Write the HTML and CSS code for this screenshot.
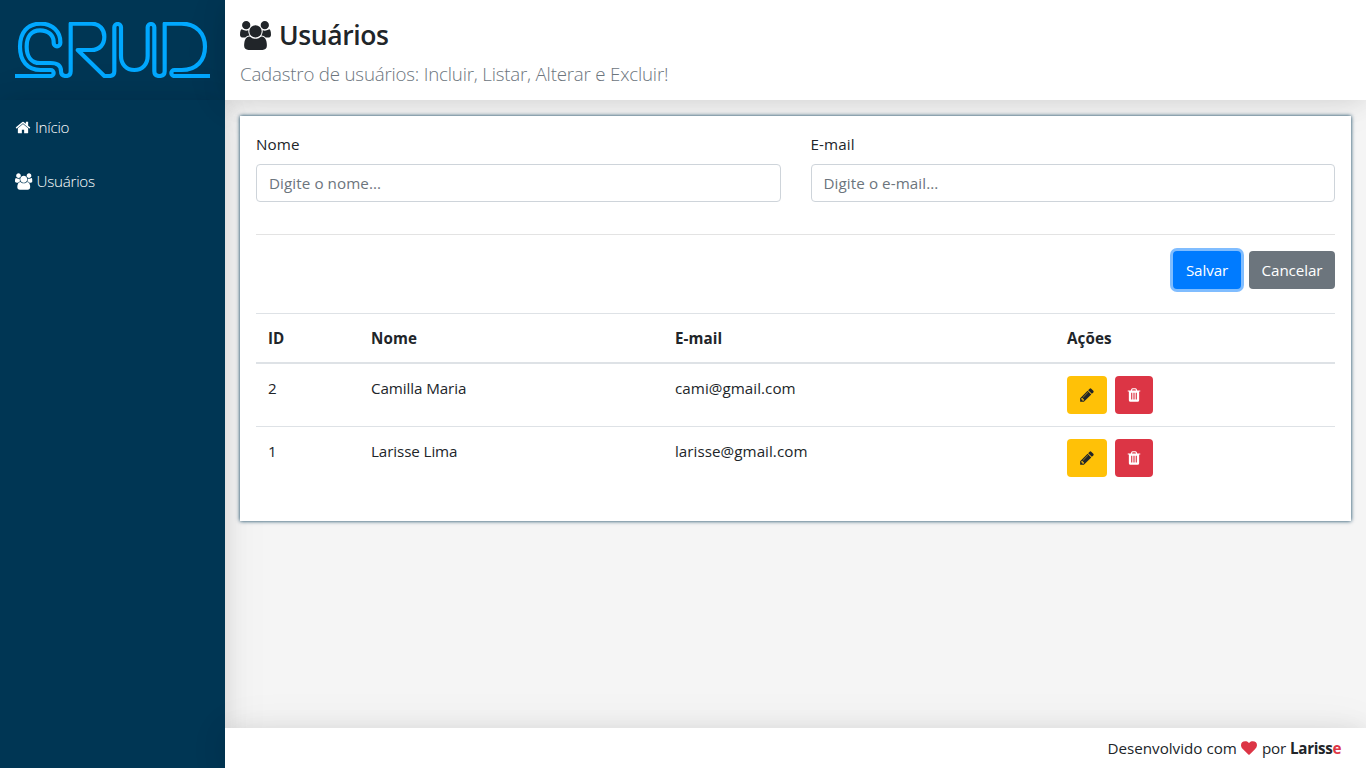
FILE: index.html
```html
<!DOCTYPE html>
<html lang="pt-BR">
<head>
<meta charset="utf-8">
<title>Usuários</title>
<link rel="stylesheet" href="styles.css">
</head>
<body>
<svg class="defs" width="0" height="0" aria-hidden="true">
  <symbol id="home" viewBox="0 0 1792 1792"><path d="M1472 992v480q0 26-19 45t-45 19h-384v-384h-256v384h-384q-26 0-45-19t-19-45v-480q0-1 .5-3t.5-3l575-474 575 474q1 2 1 6zm223-69l-62 74q-8 9-21 11h-3q-13 0-21-7l-692-577-692 577q-12 8-24 7-13-2-21-11l-62-74q-8-10-7-23.5t11-21.5l719-599q32-26 76-26t76 26l244 204v-195q0-14 9-23t23-9h192q14 0 23 9t9 23v408l219 182q10 8 11 21.5t-7 23.5z"/></symbol>
  <symbol id="users" viewBox="0 0 1920 1792"><path d="M593 896q-162 5-265 128h-134q-82 0-138-40.5t-56-118.5q0-353 124-353 6 0 43.5 21t97.5 42.5 119 21.5q67 0 133-23-5 37-5 66 0 139 81 256zm1071 637q0 120-73 189.5t-194 69.5h-874q-121 0-194-69.5t-73-189.5q0-53 3.5-103.5t14-109 26.5-108.5 43-97.5 62-81 85.5-53.5 111.5-20q10 0 43 21.5t73 48 107 48 135 21.5 135-21.5 107-48 73-48 43-21.5q61 0 111.5 20t85.5 53.5 62 81 43 97.5 26.5 108.5 14 109 3.5 103.5zm-1024-1277q0 106-75 181t-181 75-181-75-75-181 75-181 181-75 181 75 75 181zm704 384q0 159-112.5 271.5t-271.5 112.5-271.5-112.5-112.5-271.5 112.5-271.5 271.5-112.5 271.5 112.5 112.5 271.5zm576 225q0 78-56 118.5t-138 40.5h-134q-103-123-265-128 81-117 81-256 0-29-5-66 66 23 133 23 59 0 119-21.5t97.5-42.5 43.5-21q124 0 124 353zm-128-609q0 106-75 181t-181 75-181-75-75-181 75-181 181-75 181 75 75 181z"/></symbol>
  <symbol id="pencil" viewBox="0 0 1792 1792"><path d="M491 1536l91-91-235-235-91 91v107h128v128h107zm523-928q0-22-22-22-10 0-17 7l-542 542q-7 7-7 17 0 22 22 22 10 0 17-7l542-542q7-7 7-17zm-54-192l416 416-832 832h-416v-416zm683 96q0 53-37 90l-166 166-416-416 166-165q36-38 90-38 53 0 91 38l235 234q37 39 37 91z"/></symbol>
  <symbol id="trash" viewBox="0 0 1792 1792"><path d="M704 1376v-704q0-14-9-23t-23-9h-64q-14 0-23 9t-9 23v704q0 14 9 23t23 9h64q14 0 23-9t9-23zm256 0v-704q0-14-9-23t-23-9h-64q-14 0-23 9t-9 23v704q0 14 9 23t23 9h64q14 0 23-9t9-23zm256 0v-704q0-14-9-23t-23-9h-64q-14 0-23 9t-9 23v704q0 14 9 23t23 9h64q14 0 23-9t9-23zm-544-992h448l-48-117q-7-9-17-11h-317q-10 2-17 11zm928 32v64q0 14-9 23t-23 9h-96v948q0 83-47 143.5t-113 60.5h-832q-66 0-113-58.5t-47-141.5v-952h-96q-14 0-23-9t-9-23v-64q0-14 9-23t23-9h309l70-167q15-37 54-63t79-26h320q40 0 79 26t54 63l70 167h309q14 0 23 9t9 23z"/></symbol>
  <symbol id="heart" viewBox="0 0 1792 1792"><path d="M896 1664q-26 0-44-18l-624-602q-10-8-27.5-26t-55.5-65.5-68-97.5-53.5-121-23.5-138q0-220 127-344t351-124q62 0 126.5 21.5t120 58 95.5 68.5 76 68q36-36 76-68t95.5-68.5 120-58 126.5-21.5q224 0 351 124t127 344q0 221-229 450l-623 600q-18 18-44 18z"/></symbol>
</svg>
<div class="app">
  <aside class="logo">
    <svg class="logo-mark" viewBox="45 66 585 168" role="img" aria-label="CRUD">
      <path d="M45 228H152A9 9 0 0 0 152 210H122C82 210 60 182 60 140C60 98 82 71 122 71C158 71 181 96 181 126V129A10 10 0 0 1 161 129V126C161 106 145 91 120 91C94 91 80 110 80 140C80 170 94 189 120 189H152C172 189 183 196 183 213C183 224 188 228 198 228C208 228 212 223 212 214V71H274C299 71 313 89 313 110C313 133 299 150 274 150H233L313 228H328C338 228 343 223 343 214V82A10 10 0 0 1 363 82V168C363 193 379 210 403 210C427 210 443 193 443 168V82A10 10 0 0 1 463 82V214C463 223 468 228 478 228C489 228 494 223 494 214V71H545C590 71 615 102 615 140C615 181 590 210 545 210H523A9 9 0 0 0 523 228H630"/>
    </svg>
  </aside>
  <aside class="menu">
    <a class="menu-item"><svg class="ic ic-home"><use href="#home"/></svg><span>Início</span></a>
    <a class="menu-item"><svg class="ic ic-users"><use href="#users"/></svg><span>Usuários</span></a>
  </aside>
  <header class="header">
    <h1 class="title"><svg class="ic-title"><use href="#users"/></svg><span>Usuários</span></h1>
    <p class="lead"><span>Cadastro de usuários: Incluir, Listar, Alterar e Excluir!</span></p>
  </header>
  <main class="content">
    <div class="card">
      <div class="fields">
        <div class="field"><label class="label">Nome</label><input class="input" placeholder="Digite o nome..."></div>
        <div class="field"><label class="label">E-mail</label><input class="input" placeholder="Digite o e-mail..."></div>
      </div>
      <div class="actions">
        <button class="btn save">Salvar</button>
        <button class="btn cancel">Cancelar</button>
      </div>
      <table class="table">
        <colgroup><col class="c-id"><col class="c-name"><col class="c-mail"><col></colgroup>
        <thead><tr><th>ID</th><th>Nome</th><th>E-mail</th><th>Ações</th></tr></thead>
        <tbody>
          <tr><td>2</td><td>Camilla Maria</td><td class="mail">cami@gmail.com</td><td><div class="row-btns"><button class="btn edit"><svg class="ic-btn"><use href="#pencil"/></svg></button><button class="btn del"><svg class="ic-btn"><use href="#trash"/></svg></button></div></td></tr>
          <tr><td>1</td><td>Larisse Lima</td><td class="mail">larisse@gmail.com</td><td><div class="row-btns"><button class="btn edit"><svg class="ic-btn"><use href="#pencil"/></svg></button><button class="btn del"><svg class="ic-btn"><use href="#trash"/></svg></button></div></td></tr>
        </tbody>
      </table>
    </div>
  </main>
  <footer class="footer">
    <span class="made">Desenvolvido com</span><svg class="ic-heart"><use href="#heart"/></svg><span>por <strong>Lariss<span class="red">e</span></strong></span>
  </footer>
</div>
</body>
</html>
```
FILE: styles.css
```css
* { box-sizing: border-box; }
body {
  margin: 0;
  font: 400 15.2px/24px "Open Sans", "Noto Sans", sans-serif;
  letter-spacing: -0.1px;
  color: #212529;
}
.defs { position: absolute; }
svg { fill: currentColor; flex: none; }
.app {
  display: grid;
  grid-template: 100px 1fr 40px / 225px 1fr;
  grid-template-areas: "logo header" "menu content" "menu footer";
  height: 100vh;
  overflow: hidden;
  background: #f5f5f5;
}
.logo, .menu, .header, .footer {
  box-shadow: 0 2px 23px 0 rgba(0, 0, 0, .1), 0 2px 49px 0 rgba(0, 0, 0, .06);
}
.logo { grid-area: logo; background: #003654; padding: 22px 15px; }
.logo-mark {
  display: block;
  width: 195px;
  height: 56px;
  fill: none;
  stroke: #00a8ff;
  stroke-width: 12.5;
  stroke-linejoin: round;
}
.menu { grid-area: menu; background: #003654; color: #fff; font-weight: 300; }
.menu-item { display: flex; align-items: center; height: 54px; padding: 0 15px; letter-spacing: -0.25px; }
.ic { height: 17px; }
.ic-home { width: 16px; margin-right: 4px; }
.ic-users { width: 17.5px; margin-right: 4px; }
.header { grid-area: header; background: #fff; padding: 18px 15px 0; }
.title {
  display: flex;
  align-items: center;
  height: 34px;
  margin: 0 0 7px;
  font-size: 26.5px;
  font-weight: 600;
  letter-spacing: -0.4px;
}
.ic-title { width: 31px; height: 29px; margin-right: 8px; }
.lead { margin: 0; font-size: 18.7px; line-height: 30px; font-weight: 300; letter-spacing: -0.19px; color: #6c757d; white-space: nowrap; }
.content { grid-area: content; padding: 16px 15px; }
.card {
  height: 405px;
  padding: 16px;
  background: #fff;
  box-shadow: 0 0 4px #003654;
}
.fields {
  display: grid;
  grid-template-columns: 1fr 1fr;
  gap: 30px;
  height: 103px;
  border-bottom: 1px solid #e3e3e3;
}
.label { display: block; height: 32px; letter-spacing: 0.1px; }
.input {
  display: block;
  width: 100%;
  height: 38px;
  padding: 6px 12px;
  border: 1px solid #ced4da;
  border-radius: 4px;
  font: inherit;
  letter-spacing: 0.08px;
}
.input::placeholder { color: #6c757d; opacity: 1; }
.actions { display: flex; justify-content: flex-end; gap: 8px; padding-top: 16px; height: 78px; }
.btn {
  display: flex;
  align-items: center;
  justify-content: center;
  height: 38px;
  padding: 0;
  border: 0;
  border-radius: 4px;
  font: inherit;
  letter-spacing: inherit;
  color: #fff;
}
.save { width: 68px; background: #007bff; box-shadow: 0 0 0 3px #80bdff; }
.cancel { width: 86px; background: #6c757d; }
.table { width: 100%; table-layout: fixed; border-collapse: collapse; }
.c-id { width: 103px; }
.c-name { width: 304px; }
.c-mail { width: 392px; }
.table th, .table td { padding: 12px; text-align: left; vertical-align: top; border-top: 1px solid #dee2e6; }
.table thead th { border-bottom: 2px solid #dee2e6; letter-spacing: 0.08px; }
.table .mail { letter-spacing: 0.04px; }
.row-btns { display: flex; gap: 8px; }
.edit { width: 40px; background: #ffc107; color: #212529; }
.del { width: 38px; background: #dc3545; }
.ic-btn { width: 16px; height: 16px; }
.footer {
  grid-area: footer;
  display: flex;
  align-items: center;
  justify-content: flex-end;
  padding: 0 25px;
  background: #fff;
}
.footer strong { letter-spacing: -0.35px; }
.made { letter-spacing: 0; }
.ic-heart { width: 16px; height: 16px; margin: 0 5px 0 4px; color: #dc3545; }
.red { color: #dc3545; }
```
